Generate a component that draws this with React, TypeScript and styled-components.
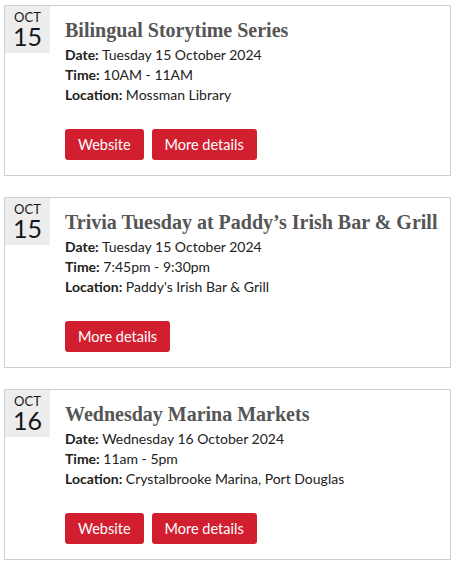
import React from "react";
import styled, { createGlobalStyle } from "styled-components";

const Global = createGlobalStyle`
  html, body { margin: 0; padding: 0; background: #fff; }
  body { font-family: Lato, "Open Sans", sans-serif; }
`;

const List = styled.div`
  padding: 5px 3px 0 4px;
  display: flex;
  flex-direction: column;
  gap: 21px;
`;

const Card = styled.div`
  border: 1px solid #cfcfcf;
  display: flex;
  align-items: flex-start;
`;

const DateBox = styled.div`
  width: 45px;
  height: 47px;
  background: #ededed;
  display: flex;
  flex-direction: column;
  align-items: center;
  color: #161616;
  flex-shrink: 0;
`;

const Month = styled.div`
  font-size: 13px;
  line-height: 13px;
  margin-top: 5px;
`;

const Day = styled.div`
  font-size: 25px;
  line-height: 25px;
  margin-top: 0px;
`;

const Body = styled.div`
  padding: 12px 0 15px 15px;
  display: flex;
  flex-direction: column;
`;

const Title = styled.div`
  font-family: "Liberation Serif", serif;
  font-weight: bold;
  font-size: 20px;
  line-height: 24px;
  color: #555;
`;

const Details = styled.div`
  margin-top: 3px;
  font-size: 14px;
  line-height: 20px;
  color: #222;
`;

const Label = styled.b`
  font-weight: bold;
`;

const Buttons = styled.div`
  display: flex;
  gap: 8px;
  margin-top: 24px;
`;

const Button = styled.a`
  display: inline-flex;
  align-items: center;
  height: 31px;
  padding: 0 13px;
  background: #d21f2f;
  color: #fff;
  font-size: 14.5px;
  border-radius: 3px;
  text-decoration: none;
`;

type Ev = {
  m: string; d: string; title: string; date: string; time: string; loc: string; site: boolean;
};

const events: Ev[] = [
  { m: "OCT", d: "15", title: "Bilingual Storytime Series", date: "Tuesday 15 October 2024", time: "10AM - 11AM", loc: "Mossman Library", site: true },
  { m: "OCT", d: "15", title: "Trivia Tuesday at Paddy\u2019s Irish Bar & Grill", date: "Tuesday 15 October 2024", time: "7:45pm - 9:30pm", loc: "Paddy's Irish Bar & Grill", site: false },
  { m: "OCT", d: "16", title: "Wednesday Marina Markets", date: "Wednesday 16 October 2024", time: "11am - 5pm", loc: "Crystalbrooke Marina, Port Douglas", site: true },
];

export default function App() {
  return (
    <>
      <Global />
      <List>
        {events.map((e, i) => (
          <Card key={i}>
            <DateBox>
              <Month>{e.m}</Month>
              <Day>{e.d}</Day>
            </DateBox>
            <Body>
              <Title>{e.title}</Title>
              <Details>
                <div><Label>Date:</Label> {e.date}</div>
                <div><Label>Time:</Label> {e.time}</div>
                <div><Label>Location:</Label> {e.loc}</div>
              </Details>
              <Buttons>
                {e.site && <Button>Website</Button>}
                <Button>More details</Button>
              </Buttons>
            </Body>
          </Card>
        ))}
      </List>
    </>
  );
}
